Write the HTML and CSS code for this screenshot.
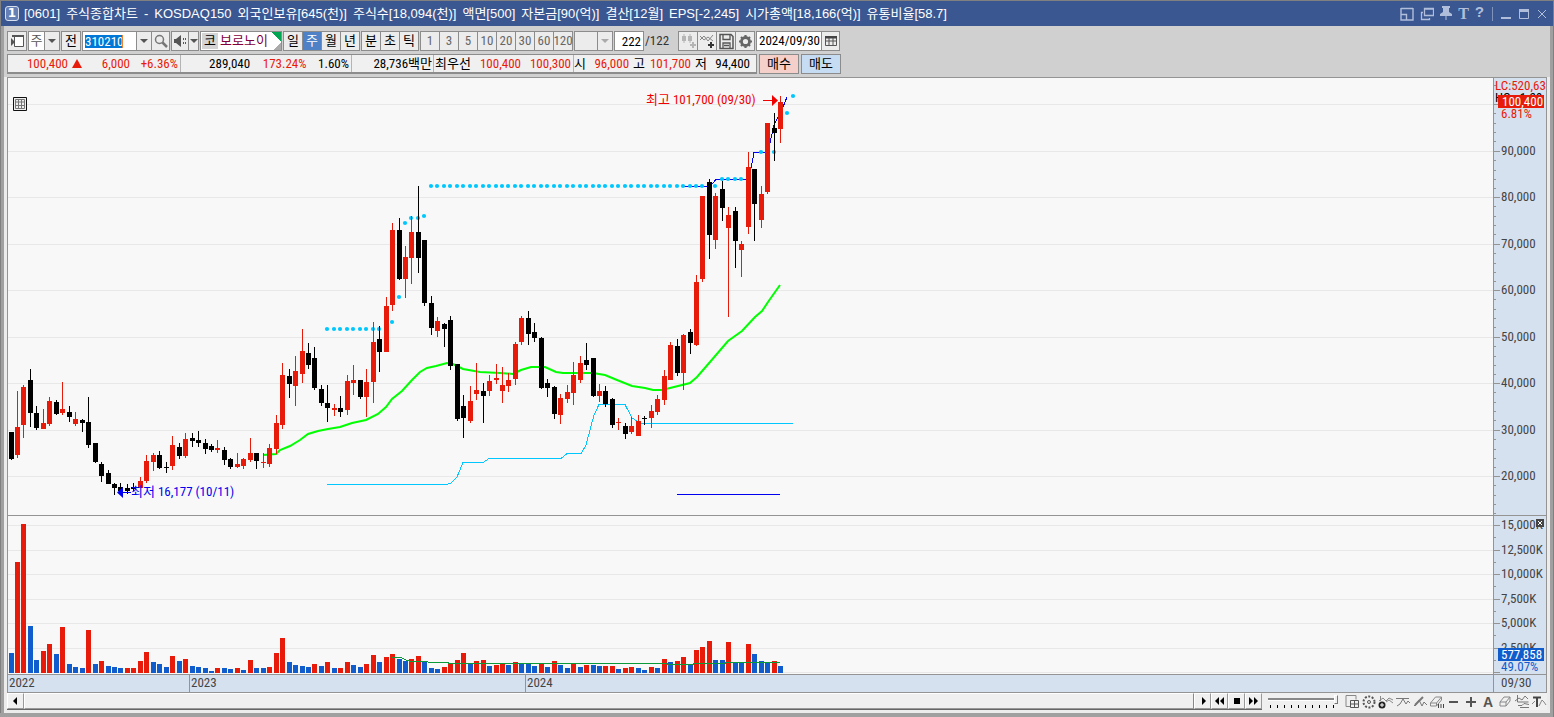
FILE: index.html
```html
<!DOCTYPE html>
<html lang="ko">
<head>
<meta charset="utf-8">
<title>[0601] 주식종합차트</title>
<link rel="stylesheet" href="styles.css">
</head>
<body>
<div class="window">
  <header class="titlebar">
    <span class="win-no">1</span>
    <h1 class="title">
      <span>[0601]</span><span>주식종합차트</span><span>-</span><span>KOSDAQ150</span><span>외국인보유[645(천)]</span><span>주식수[18,094(천)]</span><span>액면[500]</span><span>자본금[90(억)]</span><span>결산[12월]</span><span>EPS[-2,245]</span><span>시가총액[18,166(억)]</span><span>유통비율[58.7]</span>
    </h1>
    <div class="win-tools">
      <button aria-label="크기"><svg width="14" height="14" fill="none" stroke="currentColor"><path d="M1 1.5h12M1 1v12h12V1M1 7.5h5.5v5.500" stroke-width="1.400"/></svg></button>
      <button aria-label="복제"><svg width="14" height="14" fill="none" stroke="currentColor"><path d="M4.500 1.500h9v7h-9zM4.500 2.200h9M3 5.500H1.500v7h8V11" stroke-width="1.300"/></svg></button>
      <button aria-label="고정"><svg width="12" height="15" fill="currentColor"><path d="M2 0h8v2H9v4l3 2v2H0V8l3-2V2H2zM5.500 10h1v4h-1z"/></svg></button>
      <button aria-label="글꼴" class="serif">T</button>
      <button aria-label="도움말" class="mono">?</button>
      <i class="win-sep"></i>
      <button aria-label="최소화"><svg width="12" height="14"><path d="M1 10h10v2H1z" fill="currentColor"/></svg></button>
      <button aria-label="최대화"><svg width="12" height="14"><path d="M1.500 2.500h9v9h-9z" fill="none" stroke="currentColor"/><path d="M1 2h10v3H1z" fill="currentColor"/></svg></button>
      <button aria-label="닫기"><svg width="12" height="14"><path d="M2 3l8 8M10 3l-8 8" stroke="currentColor"/></svg></button>
    </div>
  </header>

  <div class="toolbar">
    <button class="box sq" aria-label="패널"><svg width="17" height="16"><path d="M5.500 2.500h9v11h-9z" fill="#fff" stroke="#555"/><path d="M3 2h12v2H3zM2 5l4 4-4 4z" fill="#555"/></svg></button>
    <div class="box combo kind"><select aria-label="종류"><option>주</option></select><i class="drop"></i></div>
    <button class="box sq">전</button>
    <div class="box combo code">
      <div class="field"><input aria-label="종목코드" value="310210"></div><i class="drop"></i>
      <button class="find" aria-label="검색"><svg width="16" height="16" fill="none" stroke="#777"><circle cx="6.500" cy="6.500" r="4" stroke-width="1.500"/><path d="M9.500 9.500l4.500 4.500" stroke-width="2.500"/></svg></button>
    </div>
    <div class="box combo sound"><button aria-label="소리"><svg width="16" height="14" fill="#555"><path d="M2 5h2l5-4v12L4 9H2zM11 4h1v2h-1zM11 8h1v2h-1zM13 4h1v2h-1zM13 8h1v2h-1z"/></svg></button><i class="drop"></i></div>
    <div class="box stock"><span class="mkt">코</span><span class="name">보로노이</span></div>
    <div class="group"><button>일</button><button class="on">주</button><button>월</button><button>년</button></div>
    <div class="group"><button>분</button><button>초</button><button>틱</button></div>
    <div class="group dim"><button>1</button><button>3</button><button>5</button><button>10</button><button>20</button><button>30</button><button>60</button><button>120</button></div>
    <div class="box combo blank"><select aria-label="분 단위" disabled><option></option></select><i class="drop"></i></div>
    <input class="box count" aria-label="봉 개수" value="222"><span class="total">/122</span>
    <div class="group icons">
      <button aria-label="봉 추가"><svg width="17" height="17" fill="#b5b5b5"><path d="M2 3h4v5H2zM3.500 1h1v9h-1zM8 3h4v5H8zM9.500 1h1v9h-1zM12 9h2v2h2v2h-2v2h-2v-2h-2v-2h2z"/></svg></button>
      <button aria-label="지표 추가"><svg width="17" height="17"><path d="M1 7l4-4 4 5 5-6M1 3l4 4 4-3 5 4" fill="none" stroke="#888"/><path d="M11 9h2v2h2v2h-2v2h-2v-2H9v-2h2z" fill="#333"/></svg></button>
      <button aria-label="저장"><svg width="17" height="17" fill="none" stroke="#555"><path d="M2 1.500h11l2 2v12H2z" stroke-width="1.500"/><path d="M5 2v4.500h7V2M5 15v-5h7v5M6 12.500h5" stroke-width="1.300"/></svg></button>
      <button aria-label="설정"><svg width="17" height="17" fill="none" stroke="#666"><circle cx="8.500" cy="8.500" r="4" stroke-width="2.800"/><path d="M8.500 2v2M8.500 13v2M2 8.500h2M13 8.500h2M4 4l1.500 1.500M11.500 11.500L13 13M13 4l-1.500 1.500M5.500 11.500L4 13" stroke-width="2.200"/></svg></button>
    </div>
    <div class="box combo date"><div class="field"><input aria-label="날짜" value="2024/09/30"></div><button class="find" aria-label="달력"><svg width="14" height="14" fill="none" stroke="#555"><path d="M1.500 2.500h11v9h-11zM1.500 7h11M5 4v7M9 4v7"/><path d="M1 2h12v2.500H1z" fill="#444" stroke="none"/></svg></button></div>
  </div>

  <div class="quote">
    <dl class="strip">
      <div class="cell c1"><dd class="up">100,400</dd><dd class="tri"></dd><dd class="up w48">6,000</dd><dd class="up w48">+6.36%</dd></div>
      <div class="cell c2"><dd class="w70">289,040</dd><dd class="up w56">173.24%</dd><dd class="w42">1.60%</dd></div>
      <div class="cell c3"><dd>28,736백만</dd></div>
      <div class="cell c4"><dt>최우선</dt><dd class="up w50">100,400</dd><dd class="up w50">100,300</dd></div>
      <div class="cell c5"><dt>시</dt><dd class="up w42">96,000</dd><dt class="gap">고</dt><dd class="up w46">101,700</dd><dt class="low">저</dt><dd class="w42">94,400</dd></div>
    </dl>
    <button class="order buy">매수</button>
    <button class="order sell">매도</button>
  </div>

  <main class="chart">
    <section class="pane price">
      <div class="plot">
        <svg id="price" class="canvas" height="437" role="img" aria-label="주가 차트"></svg>
        <button class="grid-btn" aria-label="표"><svg width="14" height="14"><path d="M.500.500h13v13h-13z" fill="#eee" stroke="#111"/><path d="M2.500 2.500h9v9h-9zM2.500 5h9M2.500 8.500h9M5.500 2.500v9M8.500 2.500v9" fill="none" stroke="#777"/></svg></button>
      </div>
      <svg id="priceAxis" class="axis" height="437"></svg>
    </section>
    <section class="pane volume">
      <div class="plot"><svg id="volume" class="canvas" height="158" role="img" aria-label="거래량 차트"></svg></div>
      <svg id="volumeAxis" class="axis" height="158"></svg>
    </section>
    <section class="pane dates">
      <div class="years"><span class="y22">2022</span><span class="y23">2023</span><span>2024</span></div>
      <span class="last">09/30</span>
    </section>
  </main>

  <footer class="bottom">
    <div class="scroll">
      <button class="arrow" aria-label="왼쪽"><svg width="8" height="10"><path d="M5 1v8L1 5z"/></svg></button>
      <div class="thumb"></div>
      <button class="arrow" aria-label="오른쪽"><svg width="8" height="10"><path d="M3 1v8l4-4z"/></svg></button>
      <button class="arrow" aria-label="뒤로"><svg width="12" height="10"><path d="M5 1v8L1 5zM10 1v8L6 5z"/></svg></button>
      <button class="arrow" aria-label="정지"><svg width="10" height="10"><path d="M2 2h6v6H2z"/></svg></button>
      <button class="arrow" aria-label="앞으로"><svg width="12" height="10"><path d="M1 1v8l4-4zM6 1v8l4-4z"/></svg></button>
    </div>
    <div class="zoom"><input type="range" aria-label="확대" min="0" max="10" value="10"><i class="marks"></i></div>
    <div class="tools">
      <button aria-label="창 추가"><svg width="16" height="16" fill="none" stroke="#888"><path d="M2 12.500V1.500h10v4M2 12.500h4"/><path d="M6.500 6.500h8v7h-8zM10.500 6.500v7M6.500 10h8" stroke="#555"/></svg></button>
      <button aria-label="설정"><svg width="16" height="16" fill="none" stroke="#555"><circle cx="8" cy="8" r="5.500" stroke-width="2" stroke-dasharray="2 1.500"/><circle cx="8" cy="8" r="1.500"/></svg></button>
      <button aria-label="지표"><svg width="16" height="16" fill="none" stroke="#888"><path d="M2.500 2v5M1 7l4-3 3 3 3-3 4 2M8 8l3-2 4 3" /><circle cx="4" cy="11" r="3.500" fill="#222" stroke="none"/><path d="M2 11h4M4 9v4" stroke="#fff"/></svg></button>
      <button aria-label="추세선"><svg width="16" height="16" fill="none" stroke="#777"><path d="M1 4.500h13M2 12l3-2 3-5 3 5 2-3 2 2"/></svg></button>
      <button aria-label="빗금선"><svg width="16" height="16" fill="none" stroke="#777"><path d="M2 12L11 3M3 12l4-6 3 6 2-4 3 3" /><path d="M3 11l8-8" stroke-width="2"/></svg></button>
      <button aria-label="모두 지우기"><svg width="16" height="16" fill="none" stroke="#888"><path d="M1.500 9l5-6h6l-5 6zM1.500 9v3h6l5-6V3M7.500 9v3"/><path d="M9.500 10v4M12 10v4M14.500 10v4" stroke="#444"/></svg></button>
      <button aria-label="축소"><svg width="16" height="16"><path d="M3 7h9v2H3z" fill="#555"/></svg></button>
      <button aria-label="확대"><svg width="16" height="16"><path d="M3 7h4V3h2v4h4v2H9v4H7V9H3z" fill="#555"/></svg></button>
      <button aria-label="글자" class="letter">A</button>
      <button aria-label="지우개"><svg width="16" height="16" fill="none" stroke="#888"><path d="M3 8l4-5h6l-4 5zM3 8v4h6l4-5V3M9 8v4"/></svg></button>
      <button aria-label="분석"><svg width="16" height="16" fill="none" stroke="#777"><path d="M3.500 1v7h11M1 7l4-3 3 2 3-4 3 3M4 11.500h4l2-2 5 1M6 13.500h9"/></svg></button>
      <button aria-label="문자"><svg width="16" height="16" fill="none" stroke="#888"><path d="M2 3.500h8M6 3v10" stroke="#444" stroke-width="2"/><path d="M1 10l3-3M8 12l3-6 2 2 2 3"/></svg></button>
    </div>
  </footer>
</div>
<script src="chart.js"></script>
</body>
</html>
```
FILE: styles.css
```css
* { box-sizing: border-box; }
body {
  margin: 0;
  font: 13px/16px "Liberation Sans Narrow", "Roboto Condensed", "Liberation Sans", "Noto Sans CJK KR", sans-serif;
  color: #000;
}
button, input, select { font: inherit; color: inherit; margin: 0; padding: 0; border: 0; background: none; border-radius: 0; outline: 0; }
button { display: flex; align-items: center; justify-content: center; }
h1, dl, dd, dt { margin: 0; }

.window {
  min-height: 100vh;
  display: flex;
  flex-direction: column;
  background: linear-gradient(90deg, #808080 1px, #a0a0a0 1px, #a0a0a0 4px, #ececec 4px);
  border-top: 1px solid #808080;
  border-right: 1px solid #808080;
  box-shadow: inset 0 -4px #a0a0a0, inset -3px 0 #a0a0a0;
}

.titlebar {
  height: 25px;
  margin-left: 1px;
  padding: 0 5px 0 4px;
  display: flex;
  align-items: center;
  background: #3a5791;
  color: #fff;
}
.win-no {
  width: 14px; height: 15px;
  border: 1px solid #d8e0f0;
  border-radius: 3px;
  background: #6680b4;
  font: bold 12px/13px "DejaVu Sans", sans-serif;
  text-align: center;
}
.title { display: flex; gap: 6px; padding-left: 5px; font: 13px/16px "Liberation Sans", "Noto Sans CJK KR", sans-serif; white-space: nowrap; }
.win-tools { margin-left: auto; display: flex; align-items: center; gap: 6px; color: #b0bedb; }
.win-tools .serif { font: bold 16px/16px "Liberation Serif", serif; }
.win-tools .mono { font: bold 15px/16px "Liberation Mono", monospace; }
.win-sep { width: 1px; height: 14px; margin: 0 1px 0 2px; background: #8093ba; }

.toolbar, .quote { display: flex; margin: 0 3px 0 4px; padding-left: 3px; background: #d0d0d0; }
.toolbar { gap: 1px; padding-top: 5px; height: 28px; align-items: flex-start; }
.box { height: 20px; border: 1px solid #8c8c8c; background: #ececec; }
.sq { width: 20px; }
.combo { display: flex; background: #fff; }
.combo select, .field { flex: 1; min-width: 0; appearance: none; text-align: center; }
.field { display: flex; align-items: center; padding-left: 2px; }
.field input { width: 100%; line-height: 16px; }
.drop { width: 15px; border-left: 1px solid #8c8c8c; background: #ececec; display: flex; align-items: center; justify-content: center; }
.drop::after { content: ""; border: 4px solid transparent; border-top-color: #555; border-bottom: 0; }
.find { width: 18px; border-left: 1px solid #8c8c8c; background: #ececec; }
.kind { width: 32px; color: #555; }
.code { width: 88px; }
.code input { width: 38px; line-height: 13px; height: 13px; background: #0078d7; color: #fff; border-right: 1px solid #f08030; }
.sound { width: 28px; background: #ececec; }
.sound .drop { width: 11px; }
.stock { width: 82px; display: flex; align-items: center; gap: 2px; padding-left: 1px; background: linear-gradient(225deg, #00a651 7px, transparent 7px), linear-gradient(315deg, #aaa 5px, #fff 5px); }
.mkt { width: 16px; background: #d4d4d4; text-align: center; }
.name { color: #800040; }
.group { display: flex; border: 1px solid #8c8c8c; border-right: 0; }
.group button { width: 19px; height: 18px; border-right: 1px solid #8c8c8c; background: #ececec; }
.group .on { background: #4f81c7; color: #fff; }
.dim { color: #666; }
.blank { width: 39px; background: #ececec; }
.blank .drop::after { border-top-color: #aaa; }
.count { width: 30px; background: #fff; text-align: right; padding-right: 2px; }
.total { width: 32px; line-height: 20px; color: #333; }
.date { width: 84px; }

.quote { height: 23px; gap: 2px; }
.strip { display: flex; width: 750px; height: 20px; border: 1px solid #8c8c8c; border-width: 1px 1px 2px; background: #f0f0f0; line-height: 18px; }
.cell { display: flex; justify-content: flex-end; border-right: 1px solid #b4b4b4; padding-right: 2px; white-space: nowrap; text-align: right; }
.c1 { width: 173px; }
.c2 { width: 171px; }
.c3 { width: 82px; padding-right: 1px; }
.c4 { width: 140px; }
.c5 { flex: 1; border: 0; padding-right: 6px; }
.up { color: #e81a0a; }
.tri { width: 10px; height: 9px; margin: 4px 0 0 4px; background: #e81a0a; clip-path: polygon(50% 0, 100% 100%, 0 100%); }
.w42 { width: 43px; } .w46 { width: 46px; } .w48 { width: 48px; } .w50 { width: 50px; } .w56 { width: 57px; } .w70 { width: 70px; }
.gap { padding-left: 4px; }
.low { padding-left: 4px; }
.order { width: 40px; height: 20px; border: 1px solid #8c8c8c; }
.buy { background: #f5cfca; }
.sell { background: #c5dcf2; }

.chart { margin: 0 7px; margin-right: 6px; border: 1px solid #949494; }
.pane { display: grid; grid-template-columns: minmax(0, 1fr) 53px; border-bottom: 1px solid #949494; }
.dates { border-bottom: 0; height: 17px; background: #d6e1f0; color: #444; }
.plot { position: relative; background: #f8f8f8; }
.canvas, .axis { display: block; width: 100%; }
.axis { border-left: 1px solid #949494; background: #d6e1f0; }
.axis text { fill: #444; }
.axis .red { fill: #e81a0a; } .axis .blue { fill: #115ccc; } .axis .white { fill: #fff; } .axis .black { fill: #000; }
.grid-btn { position: absolute; left: 5px; top: 19px; }
.years { display: flex; }
.years span { padding-left: 1px; }
.years span + span { border-left: 1px solid #949494; }
.years .y22 { width: 181px; }
.years .y23 { width: 336px; }
.last { border-left: 1px solid #949494; padding-left: 7px; }

.bottom { display: flex; margin: 0 6px 7px 7px; height: 17px; background: #f0f0f0; }
.scroll { flex: 1; display: flex; border-bottom: 1px solid #666; }
.arrow { width: 17px; border: 1px solid; border-color: #fff #999 #999 #fff; background: #f0f0f0; }
.thumb { flex: 1; border: 1px solid; border-color: #fff #888 #999 #fff; }
.zoom { width: 82px; padding: 2px 6px 0; }
.zoom input { display: block; appearance: none; width: 70px; height: 9px; background: linear-gradient(#888 2px, #fff 2px, #fff 3px, transparent 3px) 0 3px no-repeat; }
.zoom input::-webkit-slider-thumb { appearance: none; width: 4px; height: 9px; background: #f0f0f0; border: 1px solid; border-color: #fff #777 #777 #fff; }
.marks { display: block; height: 3px; margin: 1px 2px 0; background: repeating-linear-gradient(90deg, #000 0 1px, transparent 1px 7px); }
.tools { display: flex; gap: 1px; }
.tools button { width: 16px; }
.tools .letter { font: bold 14px/16px "Liberation Sans", sans-serif; color: #555; }
```
FILE: chart.js
```js
const NS = "http://www.w3.org/2000/svg";
const RED = "#e81a0a", BLUE = "#115ccc", CYAN = "#00c8ff";
const LEFT = 8;

// direction, high, body top, body bottom, low
const candles = `K432,432,459,460 R391,427,455,458 R385,387,425,438 K369,380,413,427 K406,413,428,430 R409,423,429,429
R397,401,424,426 K400,402,414,415 R382,409,413,415 K406,412,417,422 R412,419,424,426 K419,420,423,432 K397,422,445,448
K443,443,462,463 K462,464,476,482 K470,473,484,484 K483,484,488,495 K483,487,491,491 K484,488,491,494 K483,487,489,491
R477,481,488,488 R455,461,481,483 R453,455,462,471 K451,455,468,469 K462,467,468,473 R436,445,466,470 K443,447,456,459
R433,439,456,458 K433,438,441,447 K431,440,443,447 K439,443,449,454 K444,446,450,452 R440,448,450,453 K447,450,460,465
K458,459,467,469 R453,464,467,468 R458,459,466,469 R438,453,460,462 K453,453,461,469 R453,462,463,468 R444,448,464,467
R415,423,449,454 R363,375,425,429 K369,376,384,398 R356,371,386,406 R329,351,374,383 K343,353,365,369 K347,358,388,390
K385,389,403,406 K385,403,408,422 R404,408,410,416 K396,408,412,417 R375,381,410,415 R365,380,383,395 K380,380,397,399
R369,382,397,417 R322,342,382,403 K326,339,352,372 R297,306,352,352 R223,230,305,311 K218,230,279,280 R246,257,279,298
R216,232,258,284 K186,232,258,273 K240,240,303,306 K296,303,328,335 R317,321,331,337 K323,324,329,347 K316,320,366,370
K364,364,419,421 K395,406,418,438 R386,401,421,423 R363,390,394,400 K383,391,396,423 R375,381,391,396 R364,378,380,384
R367,385,391,403 R373,380,386,392 R342,344,379,385 R316,318,342,345 K311,318,334,345 K323,332,338,342 K337,338,388,389
K379,383,388,397 K386,387,414,419 R394,398,415,424 R385,392,399,403 R362,375,393,405 R356,363,380,383 K343,360,365,370
K358,358,396,397 R384,391,396,402 K386,391,404,407 K398,399,425,428 R418,422,423,430 K423,426,434,439 R417,426,432,434
R415,421,436,436 K416,418,419,425 R405,411,418,428 R395,399,412,415 R370,376,400,405 R342,345,380,380 K339,346,373,376
R334,335,373,390 K329,332,343,354 R275,282,345,346 R196,196,279,282 K179,182,235,259 R193,196,240,249 K181,189,208,221
R207,215,228,317 K207,211,241,268 R241,244,250,277 R152,167,227,234 K169,169,204,241 R186,194,220,228 R123,123,192,194
K113,128,133,161 R96,102,129,143`.split(/\s+/);

// direction and bar top
const volumes = `B653 R562 R524 B626 B660 R651 R644 B654 R627 B664 B667 B668 R630 B664 R661 B666 B667 B668 R668 R668
R661 R652 B662 B664 B667 R656 B661 R659 B666 B667 B668 B671 R668 B668 B669 R668 B670 R660 B668 B668 R667 R653 R638 B662
B665 B666 B667 R664 B666 R662 B668 R668 R662 B665 B667 R664 R655 B662 R657 R654 B659 B661 R659 R656 B661 B668 B669 R667
R663 R660 R653 B663 R661 R660 B666 R665 R664 B665 R662 B664 B664 B666 R664 B667 R661 B665 B668 R664 B667 R665 B665 B666
R666 R666 B669 R668 R667 B668 B670 R667 B668 R659 B662 R661 R657 B665 R650 R647 R641 B660 B660 R642 B663 B663 R644 B654
B661 B663 R661 B666`.split(/\s+/);

const average = "263,455 276,454 280,450 290,446 300,440 308,434 318,431 328,429 340,427 352,423 366,420 378,414 386,407 392,399 402,391 412,380 420,372 427,368 436,366 447,363 453,364 463,369 480,372 500,373 513,374 521,370 531,367 545,367 556,372 563,373 593,373 605,375 617,380 632,386 645,388 653,390 662,390 670,388 690,383 697,377 710,362 728,341 742,331 755,317 762,311 768,302 780,285";
const lower = "327,484.5 447,484.5 451,483 457,477 463,462.5 483,462.5 489,458.5 561,458.5 567,453.5 581,453.5 586,445 594,415 599,404.5 625,404.5 632,418 637,421 642,423.5 793,423.5";
const upper = "683,186.5 707,186.5 712,184 716,179.5 747,179.5 751,168 754,152.5 766,152.5 770,143 774,125 778,117 783,107 787,97";
const volumeAverage = "392,657.5 401,657.5 407,660.5 412,661.5 427,661.5 429,662.5 448,662.5 449,663.5 667,663.5 668,664.5 693,664.5 694,663.5 725,663.5 726,662.5 780,662.5";

const xAt = i => 11 + Math.floor(i * 6.467);

function add(parent, tag, attrs, text) {
  const el = document.createElementNS(NS, tag);
  for (const k in attrs) el.setAttribute(k, attrs[k]);
  if (text) el.textContent = text;
  parent.appendChild(el);
  return el;
}
const layer = (id, x, y) => add(document.getElementById(id), "g", { transform: `translate(${-x} ${-y})` });
const rect = (g, x, y, width, height, fill) => add(g, "rect", { x, y, width, height, fill });
const line = (g, points, stroke, width) =>
  add(g, "polyline", { points, stroke, "stroke-width": width, fill: "none", "shape-rendering": width === 1 ? "crispEdges" : "auto" });

// price pane
const p = layer("price", LEFT, 78);
const priceRows = [104, 151, 197, 244, 290, 337, 383, 430, 476];
priceRows.forEach(y => rect(p, LEFT, y, "100%", 1, "#e8e8e8"));
line(p, average, "#00ff00", 2);
line(p, lower, CYAN, 1);
line(p, upper, "#0000f0", 1);
line(p, "677,494.5 780,494.5", "#0000f0", 1);
const dot = (i, y) => add(p, "circle", { cx: xAt(i), cy: y, r: 2.1, fill: CYAN });
for (let i = 49; i <= 57; i++) dot(i, 329);
[[59, 322], [60, 297], [61, 223], [62, 218], [63, 218], [64, 216]].forEach(d => dot(...d));
for (let i = 65; i <= 109; i++) dot(i, 186);
[[110, 179], [111, 179], [112, 179], [113, 179], [116, 152], [118, 152], [120, 113], [121, 96]].forEach(d => dot(...d));
candles.forEach((c, i) => {
  const [high, top, bottom, low] = c.slice(1).split(",").map(Number);
  const fill = c[0] === "R" ? RED : "#000", x = xAt(i);
  rect(p, x, high, 1, low - high, fill);
  rect(p, x - 2, top, 5, bottom - top, fill);
});
add(p, "text", { x: 646, y: 104, fill: "#f00000" }, "최고 101,700 (09/30)");
add(p, "path", { d: "M763 100h9v-5l6 5.500-6 5.500v-5h-9z", fill: "#f00000" });
add(p, "text", { x: 131, y: 496, fill: "#0000f0" }, "최저 16,177 (10/11)");
add(p, "path", { d: "M131 492h-8v-5l-6 5.500 6 5.500v-5h8z", fill: "#0000f0" });

// price axis
const pa = layer("priceAxis", 1494, 78);
priceRows.forEach((y, k) => {
  rect(pa, 1494, y, 6, 1, "#949494");
  for (let m = 1; m < 5; m++) rect(pa, 1494, Math.round(y + m * 9.3), 2, 1, "#949494");
  if (k) add(pa, "text", { x: 1501, y: y + 4 }, (10 - k) + "0,000");
});
rect(pa, 1494, 85, 2, 1, "#949494");
add(pa, "text", { x: 1495, y: 90, class: "red" }, "LC:520,63");
add(pa, "text", { x: 1495, y: 102, class: "black" }, "HC: -1.29");
rect(pa, 1498, 95, 46, 13, RED);
add(pa, "text", { x: 1502, y: 106, class: "white" }, "100,400");
add(pa, "text", { x: 1501, y: 118, class: "red" }, "6.81%");

// volume pane
const v = layer("volume", LEFT, 516);
const volumeRows = [525, 550, 574, 599, 623, 648, 672];
volumeRows.forEach(y => rect(v, LEFT, y, "100%", 1, "#e8e8e8"));
volumes.forEach((b, i) => {
  const y = Number(b.slice(1));
  rect(v, xAt(i) - 2, y, 5, 673 - y, b[0] === "R" ? RED : BLUE);
});
line(v, volumeAverage, "#0a9a3a", 1);

// volume axis
const va = layer("volumeAxis", 1494, 516);
["15,000K", "12,500K", "10,000K", "7,500K", "5,000K", "2,500K", ""].forEach((label, k) => {
  const y = volumeRows[k];
  rect(va, 1494, y, 6, 1, "#949494");
  if (k < 6) rect(va, 1494, y + 12, 2, 1, "#949494");
  if (label) add(va, "text", { x: 1501, y: y + 4 }, label);
});
rect(va, 1536, 519, 8, 8, "#444");
add(va, "path", { d: "M1538 521l4 4M1542 521l-4 4", stroke: "#fff" });
rect(va, 1498, 648, 46, 13, BLUE);
add(va, "text", { x: 1501, y: 659, class: "white" }, "577,858");
add(va, "text", { x: 1501, y: 671, class: "blue" }, "49.07%");
```
